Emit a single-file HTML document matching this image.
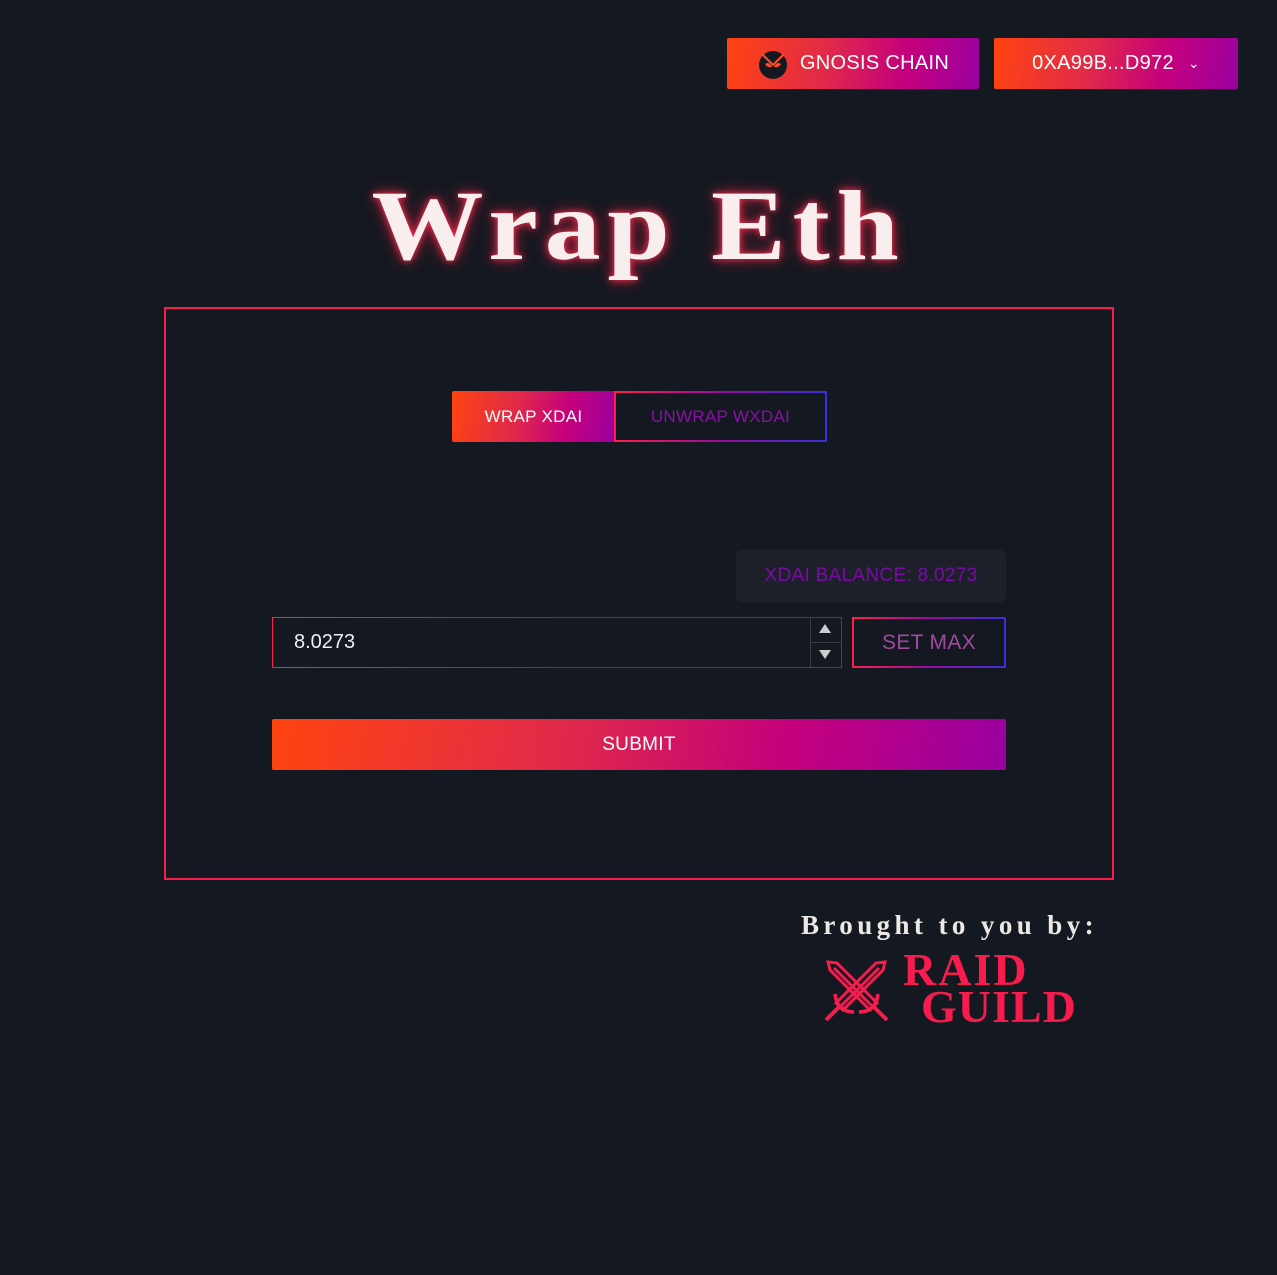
<!DOCTYPE html>
<html><head><meta charset="utf-8"><style>
*{box-sizing:border-box;margin:0;padding:0}
body{width:1277px;height:1275px;background:#141820;font-family:"Liberation Sans",sans-serif;position:relative;overflow:hidden}
.grad{background:linear-gradient(100deg,#ff4410 0%,#e0294a 40%,#c4007c 70%,#9a00a0 100%)}
.abs{position:absolute}
.btn{color:#fff;display:flex;align-items:center;justify-content:center;border-radius:2px;letter-spacing:.3px}
.gb{border:2px solid;border-image:linear-gradient(90deg,#ff1f4f,#9a0aa0 50%,#3a30d8) 1}
</style></head><body>
<div class="abs btn grad" style="left:727px;top:38px;width:252px;height:51px;font-size:20px">
<svg width="32" height="32" viewBox="0 0 32 32" style="margin-right:11px"><circle cx="16" cy="17" r="14" fill="#141820"/><path d="M5 6 L16 17 L27 6" stroke="#ff4a2a" stroke-width="2.2" fill="none"/><path d="M8 16 Q12 13 15 19 Q10 20 8 16Z M24 16 Q20 13 17 19 Q22 20 24 16Z" fill="#ff4a2a"/></svg>GNOSIS CHAIN</div>
<div class="abs btn grad" style="left:994px;top:38px;width:244px;height:51px;font-size:20px">0XA99B...D972<span style="margin-left:14px;font-size:14px">&#8964;</span></div>
<div class="abs" style="left:0;width:1277px;top:168px;text-align:center;font-family:'Liberation Serif',serif;font-weight:bold;font-size:100px;color:#f8eeee;text-shadow:0 0 6px #ff3050,0 0 14px #c0203c;letter-spacing:6px;transform:scaleX(1.12)">Wrap Eth</div>
<div class="abs" style="left:164px;top:307px;width:950px;height:573px;border:2px solid #f81c4e"></div>
<div class="abs btn grad" style="left:452px;top:391px;width:163px;height:51px;font-size:17px">WRAP XDAI</div>
<div class="abs btn gb" style="left:614px;top:391px;width:213px;height:51px;font-size:17px;color:#8a10a8;border-radius:0">UNWRAP WXDAI</div>
<div class="abs btn" style="left:736px;top:550px;width:270px;height:52px;background:#1d2029;border-radius:6px;color:#7a0aa8;font-size:19px">XDAI BALANCE: 8.0273</div>
<div class="abs gb" style="left:272px;top:617px;width:570px;height:51px;border-width:1.5px"></div>
<div class="abs" style="left:294px;top:631px;color:#eee;font-size:20px">8.0273</div>
<div class="abs" style="left:810px;top:618px;width:1px;height:49px;background:#3a3d48"></div>
<div class="abs" style="left:811px;top:642px;width:30px;height:1px;background:#3a3d48"></div>
<div class="abs" style="left:819px;top:624px;border:6px solid transparent;border-bottom:9px solid #ccc;border-top:0"></div>
<div class="abs" style="left:819px;top:650px;border:6px solid transparent;border-top:9px solid #ccc;border-bottom:0"></div>
<div class="abs btn gb" style="left:852px;top:617px;width:154px;height:51px;font-size:21px;color:#a04aa0;border-radius:0">SET MAX</div>
<div class="abs btn grad" style="left:272px;top:719px;width:734px;height:51px;font-size:19px">SUBMIT</div>
<div class="abs" style="left:801px;top:910px;font-family:'Liberation Serif',serif;font-weight:bold;font-size:27px;color:#ece8e4;letter-spacing:4.4px">Brought to you by:</div>
<svg class="abs" style="left:815px;top:950px" width="80" height="80" viewBox="0 0 80 80" fill="none" stroke="#f81c4e" stroke-width="3">
<path d="M13 12 L22 13 L62 53 L55 60 L15 20 Z M19 18 L58 57"/>
<path d="M70 12 L61 13 L21 53 L28 60 L68 20 Z M64 18 L25 57"/>
<path d="M58 56 L72 70 M25 56 L11 70" stroke-width="4"/>
<path d="M20 44 Q22 62 39 62 M63 44 Q61 62 44 62" stroke-width="3.5"/>
</svg>
<div class="abs" style="left:903px;top:950px;font-family:'Liberation Serif',serif;font-weight:bold;font-size:46px;color:#f81c4e;line-height:40px;letter-spacing:2px">RAID</div>
<div class="abs" style="left:921px;top:987px;font-family:'Liberation Serif',serif;font-weight:bold;font-size:46px;color:#f81c4e;line-height:40px;letter-spacing:1px">GUILD</div>
</body></html>
